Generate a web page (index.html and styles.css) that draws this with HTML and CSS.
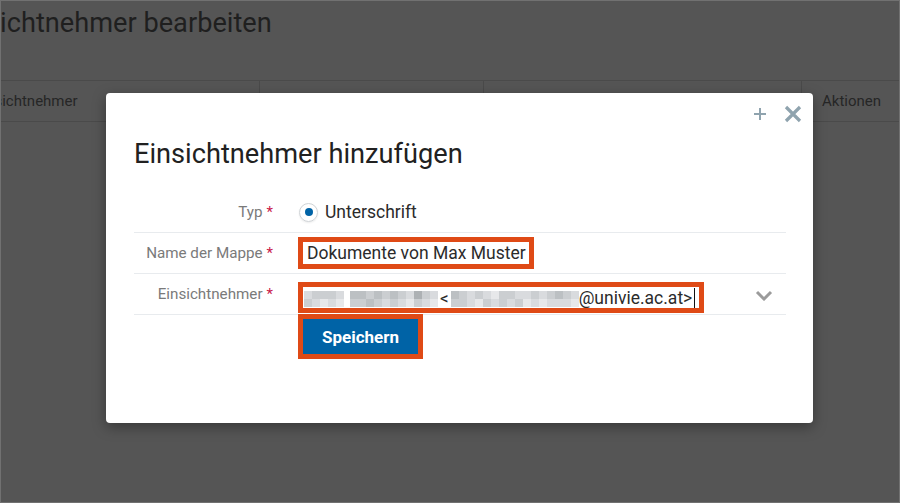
FILE: index.html
```html
<!DOCTYPE html>
<html lang="de">
<head>
<meta charset="utf-8">
<title>Einsichtnehmer bearbeiten</title>
<link rel="stylesheet" href="styles.css">
</head>
<body>
<div class="screen">
  <div class="page">
    <h1 class="page-title">Einsichtnehmer bearbeiten</h1>
    <div class="table-head">
      <div class="th th1">Einsichtnehmer</div>
      <div class="th th2"></div>
      <div class="th th3"></div>
      <div class="th th4">Aktionen</div>
    </div>
  </div>

  <div class="modal">
    <div class="modal-tools">
      <svg class="ico-plus" width="14" height="14" viewBox="0 0 14 14"><path d="M7 1v12M1 7h12" stroke="#8fa3ae" stroke-width="2" fill="none"/></svg>
      <svg class="ico-close" width="18" height="18" viewBox="0 0 18 18"><path d="M2 2l14 14M16 2L2 16" stroke="#8fa3ae" stroke-width="3.2" fill="none"/></svg>
    </div>
    <h2 class="modal-title">Einsichtnehmer hinzufügen</h2>
    <div class="form">
      <div class="row">
        <div class="label">Typ<span class="req">*</span></div>
        <div class="value">
          <span class="radio"><span class="dot"></span></span>
          <span class="radio-text">Unterschrift</span>
        </div>
      </div>
      <div class="row">
        <div class="label">Name der Mappe<span class="req">*</span></div>
        <div class="value">
          <span class="mark box-name">Dokumente von Max Muster</span>
        </div>
      </div>
      <div class="row">
        <div class="label">Einsichtnehmer<span class="req">*</span></div>
        <div class="value value-select">
          <span class="mark box-mail">
            <span class="pix">
              <i class="p2"></i><i class="p3"></i><i class="p3"></i><i class="p2"></i><i class="p3"></i><i class="p1"></i><i class="p3"></i><i class="p2"></i><i class="p2"></i><i class="p1"></i>
            </span><span class="pixgap"></span><span class="pix">
              <i class="p4"></i><i class="p3"></i><i class="p4"></i><i class="p3"></i><i class="p3"></i><i class="p4"></i><i class="p4"></i><i class="p3"></i><i class="p3"></i><i class="p2"></i><i class="p4"></i><i class="p3"></i><i class="p3"></i><i class="p2"></i><i class="p2"></i><i class="p1"></i><i class="p5"></i><i class="p3"></i><i class="p3"></i><i class="p2"></i><i class="p2"></i><i class="p1"></i>
            </span><span class="lt">&lt;</span><span class="pix">
              <i class="p4"></i><i class="p3"></i><i class="p3"></i><i class="p3"></i><i class="p2"></i><i class="p2"></i><i class="p3"></i><i class="p1"></i><i class="p2"></i><i class="p3"></i><i class="p1"></i><i class="p2"></i><i class="p3"></i><i class="p3"></i><i class="p3"></i><i class="p2"></i><i class="p2"></i><i class="p3"></i><i class="p2"></i><i class="p1"></i><i class="p3"></i><i class="p2"></i><i class="p2"></i><i class="p1"></i><i class="p3"></i><i class="p2"></i><i class="p4"></i><i class="p2"></i><i class="p3"></i><i class="p2"></i><i class="p2"></i><i class="p1"></i>
            </span><span class="mail-text">@univie.ac.at&gt;</span><span class="caret"></span>
          </span>
          <svg class="chev" width="18" height="11" viewBox="0 0 18 11"><path d="M2 2l7 7 7-7" stroke="#9b9b9b" stroke-width="3" fill="none"/></svg>
        </div>
      </div>
      <div class="actions">
        <span class="mark box-btn"><button class="btn" type="button">Speichern</button></span>
      </div>
    </div>
  </div>
</div>
</body>
</html>
```
FILE: styles.css
```css
html, body {
  margin: 0;
  padding: 0;
}
body {
  font-family: Roboto, "Liberation Sans", Arial, sans-serif;
  background: #555;
}
.screen {
  position: relative;
  width: 900px;
  height: 503px;
  box-sizing: border-box;
  border: 1px solid #717171;
  background: #555;
  overflow: hidden;
}
.page {
  margin-left: -46px;
  color: #1f1f1f;
}
.page-title {
  margin: 0 0 0 -6px;
  padding-top: 7px;
  font-size: 27.2px;
  font-weight: 400;
  line-height: 31px;
  height: 72px;
}
.table-head {
  display: flex;
  height: 40px;
  border-top: 1px solid #4a4a4a;
  border-bottom: 1px solid #4a4a4a;
}
.th {
  display: flex;
  align-items: center;
  font-size: 15px;
  color: #262626;
  box-sizing: border-box;
  padding-left: 19px;
}
.th1 { width: 305px; border-right: 1px solid #4a4a4a; }
.th2 { width: 224px; border-right: 1px solid #4a4a4a; }
.th3 { width: 318px; border-right: 1px solid #4a4a4a; }
.th4 { flex: 1; padding-left: 20px; }

.modal {
  position: absolute;
  left: 105px;
  top: 92px;
  width: 707px;
  height: 330px;
  box-sizing: border-box;
  background: #fff;
  border-radius: 4px;
  box-shadow: 0 4px 14px rgba(0, 0, 0, 0.35);
  padding: 45px 27px 0 28px;
}
.modal-tools {
  position: absolute;
  top: 12px;
  right: 11px;
  display: flex;
  align-items: center;
  gap: 17px;
}
.modal-title {
  margin: 0;
  font-size: 27.2px;
  font-weight: 400;
  line-height: 33px;
  color: #212121;
}
.form {
  margin-top: 21px;
}
.row {
  display: grid;
  grid-template-columns: 139px 1fr;
  column-gap: 25px;
  height: 40px;
  border-bottom: 1px solid #e8ebee;
}
.label {
  display: flex;
  align-items: center;
  justify-content: flex-end;
  font-size: 15.2px;
  color: #7a7a7a;
}
.req {
  color: #c9184a;
  margin-left: 4px;
  font-size: 15px;
}
.value {
  display: flex;
  align-items: center;
  font-size: 17.5px;
  color: #2b2b2b;
}
.radio {
  width: 19px;
  height: 19px;
  box-sizing: border-box;
  border: 1px solid #cfd3d6;
  border-radius: 50%;
  display: flex;
  align-items: center;
  justify-content: center;
  box-shadow: 0 1px 2px rgba(0, 0, 0, 0.08);
  margin-left: 1px;
}
.dot {
  width: 8px;
  height: 8px;
  border-radius: 50%;
  background: #0063a6;
}
.radio-text {
  margin-left: 7px;
}
.mark {
  display: inline-flex;
  align-items: center;
  border: 5px solid #df4a16;
  box-sizing: border-box;
}
.box-name {
  height: 32px;
  padding: 0 3px 0 4px;
  line-height: 22px;
}
.value-select {
  justify-content: space-between;
  padding-right: 13px;
}
.box-mail {
  height: 31px;
  margin-top: 7px;
  padding: 0 4px 0 1px;
}
.pix {
  display: inline-grid;
  grid-template-rows: 8px 8px;
  grid-auto-flow: column;
  grid-auto-columns: 8px;
  margin-top: 2px;
}
.pix i { display: block; }
.p1 { background: #e7e8ea; }
.p2 { background: #d9dbde; }
.p3 { background: #cbced1; }
.p4 { background: #bcc0c3; }
.p5 { background: #adb1b4; }
.pixgap {
  display: inline-block;
  width: 6px;
}
.lt {
  margin: 0 2px 0 2px;
  font-size: 17px;
}
.mail-text {
  font-size: 17.5px;
  margin-left: 0;
}
.caret {
  display: inline-block;
  width: 1px;
  height: 20px;
  background: #111;
  margin-left: 2px;
}
.chev {
  margin-top: 2px;
}
.actions {
  padding-left: 164px;
  margin-top: -1px;
}
.box-btn {
  padding: 0;
  width: 125px;
  height: 45px;
}
.btn {
  width: 115px;
  height: 35px;
  border: 0;
  margin: 0;
  background: #0063a6;
  color: #fff;
  font-family: Roboto, "Liberation Sans", Arial, sans-serif;
  font-size: 17px;
  font-weight: 700;
  padding: 0;
}
```
